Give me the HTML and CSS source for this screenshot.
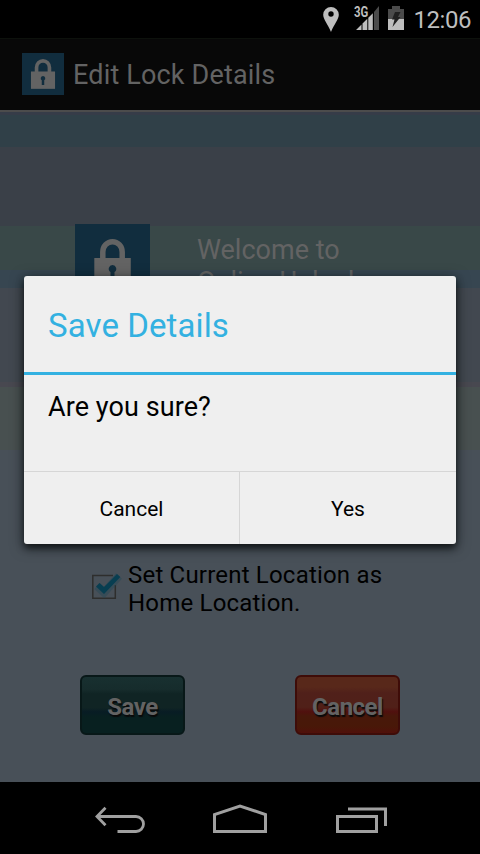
FILE: index.html
```html
<!DOCTYPE html>
<html lang="en">
<head>
<meta charset="utf-8">
<title>Edit Lock Details</title>
<link rel="stylesheet" href="styles.css">
</head>
<body>
<div class="screen">
  <header class="status">
    <svg class="pin" width="16" height="26" viewBox="0 0 16 26"><path fill-rule="evenodd" fill="#bebebe" d="M8 1a7.800 7.800 0 0 1 7.800 7.800C15.800 13.500 11 18.500 8 26 5 18.500 .2 13.500 .2 8.800A7.800 7.800 0 0 1 8 1zM8 5.300a2.700 2.700 0 1 0 0 5.400A2.700 2.700 0 0 0 8 5.300z"/></svg>
    <div class="signal">
      <svg width="24" height="24" viewBox="0 0 24 24"><path fill="#bebebe" d="M0 24l5.500-5.500V24zM6.500 17.500l4.800-4.800V24H6.500zM12.300 11.700l4.500-4.500V24h-4.500z"/><path fill="#4b4b4b" d="M18 6l5-6v24h-5z"/></svg>
      <span class="network">3G</span>
    </div>
    <svg class="battery" width="16" height="24" viewBox="0 0 16 24"><path fill="#4b4b4b" d="M4 0h8v3h4v21H0V3h4z"/><path fill="#bebebe" d="M0 13h16v11H0z"/><path fill="#202020" d="M7 6h5.500L10 11h2.500L4.500 21l2-7.500H4z"/></svg>
    <span class="clock">12:06</span>
  </header>

  <div class="actionbar">
    <svg class="logo" viewBox="0 0 75 75"><path fill="#112d3e" d="M0 0h75v75H0z"/><path fill="none" stroke="#636363" stroke-width="6.500" d="M26 34V26a11.500 12 0 0 1 23 0v8"/><path fill="#636363" d="M16 33h43v31H16z"/><path fill="#112d3e" d="M37.500 41a4.200 4.200 0 0 1 2.200 7.700V57h-4.400v-8.300a4.200 4.200 0 0 1 2.200-7.700z"/></svg>
    <h1>Edit Lock Details</h1>
  </div>

  <main class="content">
    <div class="welcome">
      <svg width="75" height="75" viewBox="0 0 75 75"><path fill="#112d3e" d="M0 0h75v75H0z"/><path fill="none" stroke="#636363" stroke-width="5.500" d="M27.800 36V28a9.700 10.300 0 0 1 19.400 0v8"/><path fill="#636363" d="M19.300 34h36.500v31H19.300z"/><path fill="#112d3e" d="M37.500 41a3.800 3.800 0 0 1 2 7V57h-4v-9a3.800 3.800 0 0 1 2-7z"/></svg>
      <p>Welcome to<br>Online Unlock</p>
    </div>
    <label class="option">
      <svg width="32" height="30" viewBox="0 0 32 30"><path fill="none" stroke="#2e2e2d" stroke-width="1.500" d="M24.300 13v13.300H1.800V3.500H22"/><path fill="none" stroke="#244756" stroke-width="8" opacity=".45" d="M6 14l7 6.500L28 4"/><path fill="#083e51" d="M5 14.500l3.500-3.500 4.500 4L26 2l3.300 3L13 22z"/></svg>
      <span>Set Current Location as<br>Home Location.</span>
    </label>
    <div class="actions">
      <button class="btn save">Save</button>
      <button class="btn cancel">Cancel</button>
    </div>
  </main>

  <nav class="navbar">
    <svg width="52" height="30" viewBox="0 0 52 30"><path fill="none" stroke="#a0a0a0" stroke-width="2.800" d="M2.500 12.500H42a7.500 7.500 0 0 1 0 15H23.500M11.500 3.800l-8.500 8.700 8.500 8.700"/></svg>
    <svg width="54" height="30" viewBox="0 0 54 30"><path fill="none" stroke="#a0a0a0" stroke-width="3" d="M1.500 27.500v-17L27 2l25.500 8.500v17z"/></svg>
    <svg width="52" height="30" viewBox="0 0 52 30"><path fill="none" stroke="#a0a0a0" stroke-width="3" d="M1.500 12.500h39v15h-39zM12 5h37.500V22"/></svg>
  </nav>

  <section class="dialog">
    <h2>Save Details</h2>
    <p class="message">Are you sure?</p>
    <div class="choices">
      <button>Cancel</button>
      <button>Yes</button>
    </div>
  </section>
</div>
</body>
</html>
```
FILE: styles.css
```css
* { box-sizing: border-box; }
body { margin: 0; background: #000; font-family: Roboto, sans-serif; }
h1, h2, p { margin: 0; font-weight: 400; }
svg { display: block; flex: none; }
button { border: 0; padding: 0; font-family: inherit; }

.screen {
  position: relative;
  width: 480px;
  height: 854px;
  display: flex;
  flex-direction: column;
  overflow: hidden;
}

.status {
  height: 38px;
  display: flex;
  align-items: flex-start;
  justify-content: flex-end;
  padding: 6px 9px 0 0;
  background: #000;
}
.pin { margin-right: 17px; }
.signal { position: relative; margin-right: 8px; }
.network {
  position: absolute;
  left: -2px;
  top: 0;
  font-size: 15px;
  line-height: 13px;
  font-weight: 700;
  color: #bebebe;
  text-shadow: 0 0 1px #000, 1px 0 0 #000;
  transform: scaleX(.76);
  transform-origin: left;
}
.battery { margin-right: 9px; }
.clock { font-size: 24px; line-height: 28px; letter-spacing: -.45px; color: #bebebe; }

.actionbar {
  height: 74px;
  display: flex;
  align-items: flex-start;
  padding: 14px 0 0 22px;
  background: #080808;
  border-top: 1px solid #0d110c;
  border-bottom: 2px solid #4c4c4c;
}
.logo { width: 42px; height: 42px; margin-right: 9px; }
.actionbar h1 { padding-top: 6px; font-size: 27px; line-height: 32px; letter-spacing: .17px; color: #636363; }

.content {
  height: 670px;
  padding-top: 112px;
  background: linear-gradient(
    #363c48 0 3px, #304048 3px 35px, #3a4048 35px 114px, #394848 114px 158px,
    #374651 158px 176px, #424850 176px 270px, #484850 270px 275px,
    #485050 275px 338px, #485058 338px);
}
.welcome { height: 336px; display: flex; padding-left: 75px; gap: 47px; }
.welcome p {
  padding-top: 10px;
  font-size: 27px;
  line-height: 32px;
  color: #636363;
}

.option { height: 115px; display: flex; padding-left: 91px; gap: 5px; color: #000; }
.option svg { margin-top: 12px; }
.option span { font-size: 24px; line-height: 28px; padding-top: 1px; letter-spacing: .2px; }

.actions { display: flex; padding-left: 80px; gap: 110px; }
.btn {
  width: 105px;
  height: 60px;
  border-radius: 6px;
  border: 2px solid;
  padding: 4px 0 0;
  font-size: 24px;
  font-weight: 700;
  letter-spacing: -.5px;
  color: #636363;
  text-shadow: 1px 2px 1px #0a0a0a;
}
.save {
  border-color: #081818;
  background: linear-gradient(#183030, #162c2c 22%, #102424 30%, #102424 55%, #081c24 62%, #082020 72%, #082020);
}
.cancel {
  border-color: #3e0c08;
  background: linear-gradient(#58281a, #58281a 18%, #50201a 28%, #502018 54%, #50100e 62%, #48180a 70%, #481808 88%, #50100a);
}

.navbar {
  height: 72px;
  display: flex;
  justify-content: space-between;
  padding: 22px 92px 0 94px;
  background: #000;
}
.navbar svg:nth-child(2) { margin-left: -2px; }

.dialog {
  position: absolute;
  left: 24px;
  top: 276px;
  width: 432px;
  height: 268px;
  display: flex;
  flex-direction: column;
  background: #efefef;
  border-radius: 3px;
  box-shadow: 0 4px 7px rgba(0, 0, 0, .6), 0 3px 14px rgba(0, 12, 12, .5);
}
.dialog h2 {
  height: 99px;
  padding-left: 24px;
  border-bottom: 3px solid #33b1e1;
  font-size: 33px;
  line-height: 99px;
  letter-spacing: .1px;
  color: #33b1e1;
}
.message {
  flex: 1;
  padding: 15px 24px;
  font-size: 27px;
  line-height: 34px;
  letter-spacing: .08px;
  color: #000;
}
.choices { height: 73px; display: flex; border-top: 1px solid #d6d6d6; }
.choices button { flex: 1; background: transparent; font-size: 21px; padding-top: 2px; color: #000; }
.choices button:first-child { flex: 0 0 215px; }
.choices button + button { border-left: 1px solid #d6d6d6; }
```
